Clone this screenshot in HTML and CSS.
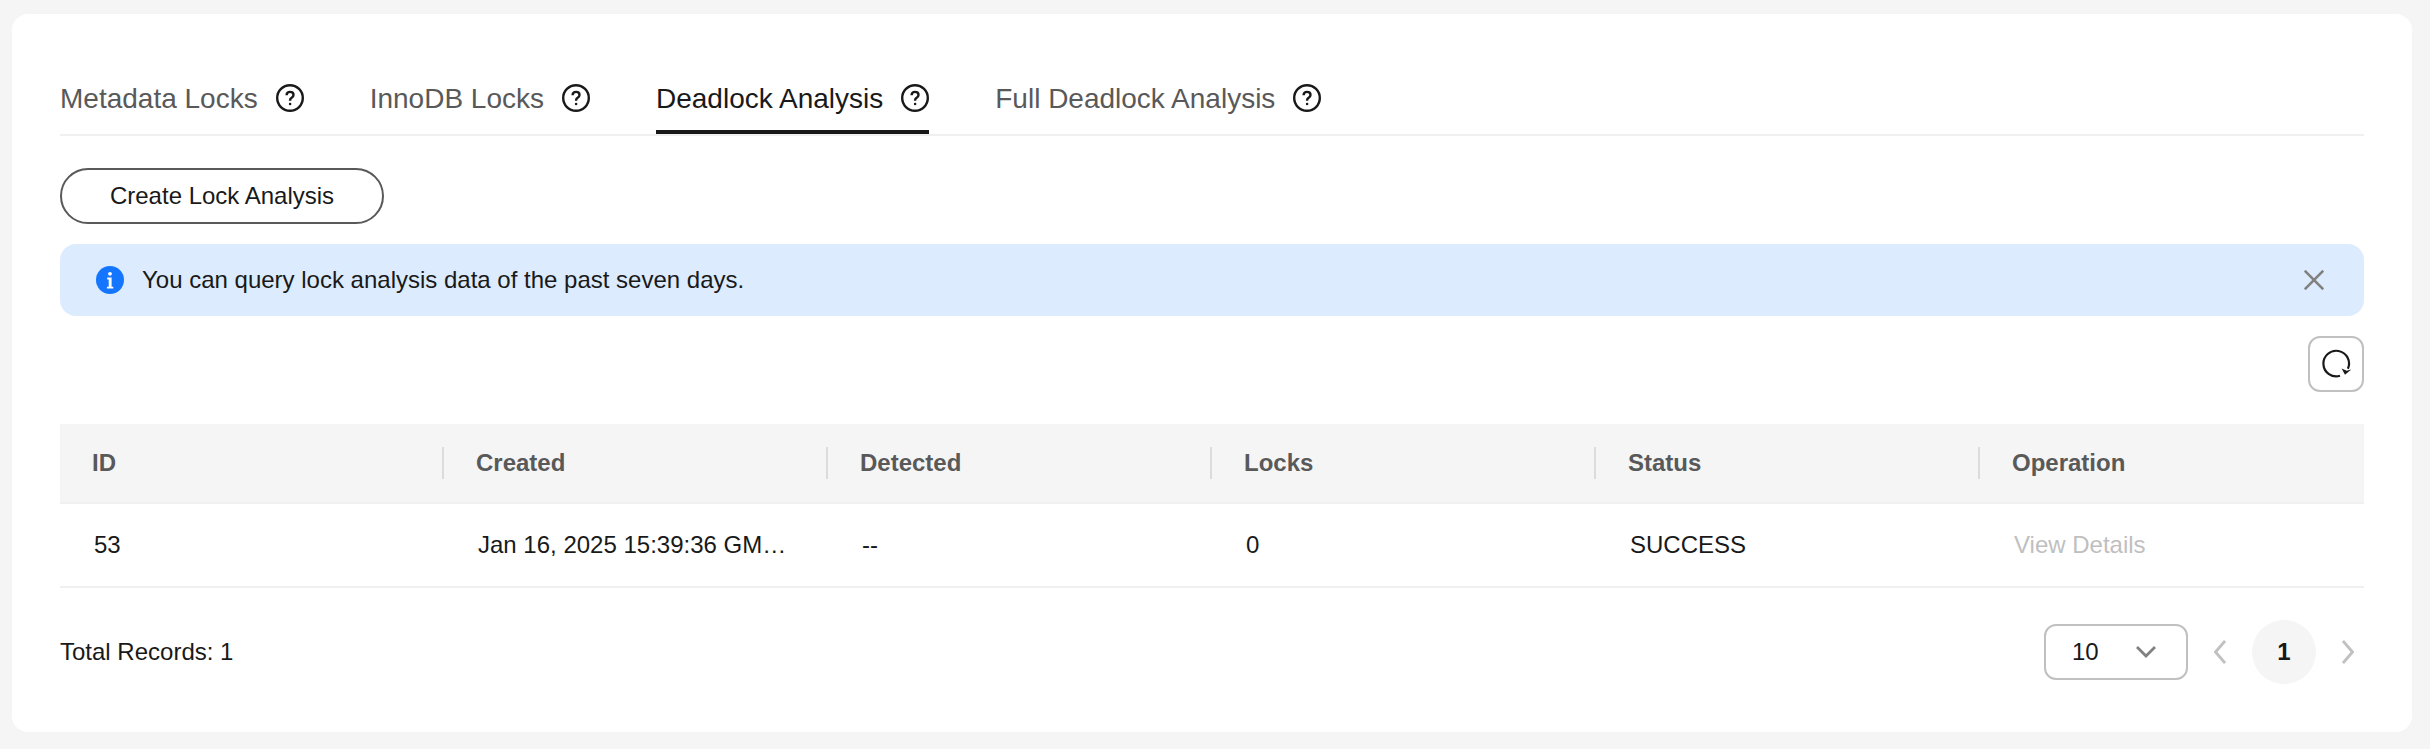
FILE: index.html
```html
<!DOCTYPE html>
<html lang="en">
<head>
<meta charset="utf-8">
<title>Deadlock Analysis</title>
<link rel="stylesheet" href="styles.css">
</head>
<body>
<main class="card">
  <nav class="tabs">
    <div class="tab"><span class="tab-label">Metadata Locks</span>
      <svg class="help" viewBox="0 0 28 28"><ellipse cx="14" cy="14" rx="12.8" ry="12.8"/><path d="M10.6 11.2c0-2 1.4-3.3 3.5-3.3s3.4 1.2 3.4 3c0 1.5-.9 2.2-1.9 2.9-.9.6-1.5 1.2-1.5 2.4v.6"/><circle class="dot" cx="14.1" cy="20" r="1.3"/></svg>
    </div>
    <div class="tab"><span class="tab-label">InnoDB Locks</span>
      <svg class="help" viewBox="0 0 28 28"><ellipse cx="14" cy="14" rx="12.8" ry="12.8"/><path d="M10.6 11.2c0-2 1.4-3.3 3.5-3.3s3.4 1.2 3.4 3c0 1.5-.9 2.2-1.9 2.9-.9.6-1.5 1.2-1.5 2.4v.6"/><circle class="dot" cx="14.1" cy="20" r="1.3"/></svg>
    </div>
    <div class="tab tab-active"><span class="tab-label">Deadlock Analysis</span>
      <svg class="help" viewBox="0 0 28 28"><ellipse cx="14" cy="14" rx="12.8" ry="12.8"/><path d="M10.6 11.2c0-2 1.4-3.3 3.5-3.3s3.4 1.2 3.4 3c0 1.5-.9 2.2-1.9 2.9-.9.6-1.5 1.2-1.5 2.4v.6"/><circle class="dot" cx="14.1" cy="20" r="1.3"/></svg>
    </div>
    <div class="tab"><span class="tab-label">Full Deadlock Analysis</span>
      <svg class="help" viewBox="0 0 28 28"><ellipse cx="14" cy="14" rx="12.8" ry="12.8"/><path d="M10.6 11.2c0-2 1.4-3.3 3.5-3.3s3.4 1.2 3.4 3c0 1.5-.9 2.2-1.9 2.9-.9.6-1.5 1.2-1.5 2.4v.6"/><circle class="dot" cx="14.1" cy="20" r="1.3"/></svg>
    </div>
  </nav>

  <button class="create-btn" type="button">Create Lock Analysis</button>

  <div class="notice">
    <svg class="notice-icon" viewBox="0 0 28 28"><circle class="info-bg" cx="14" cy="14" r="14"/><circle class="info-fg" cx="14" cy="7.8" r="1.9"/><path class="info-fg" d="M11.2 11.6h4.4v9.2h1.7v1.8h-6.4v-1.8h1.8v-7.4h-1.5z"/></svg>
    <span class="notice-text">You can query lock analysis data of the past seven days.</span>
    <svg class="notice-close" viewBox="0 0 20 20"><path d="M.7.7l18.6 18.6M19.3.7L.7 19.3"/></svg>
  </div>

  <div class="toolbar">
    <button class="refresh-btn" type="button" aria-label="Refresh">
      <svg viewBox="0 0 30 30"><path class="arc" d="M19 26.8a12.8 12.8 0 1 1 7.9-7"/><path class="arrow" d="M20.6 19.4l3.4 6.4 6.4-5.4-4.6 1.4z"/></svg>
    </button>
  </div>

  <table class="grid">
    <thead>
      <tr>
        <th><div class="th-inner">ID</div></th>
        <th><div class="th-inner">Created</div></th>
        <th><div class="th-inner">Detected</div></th>
        <th><div class="th-inner">Locks</div></th>
        <th><div class="th-inner">Status</div></th>
        <th><div class="th-inner">Operation</div></th>
      </tr>
    </thead>
    <tbody>
      <tr>
        <td>53</td>
        <td>Jan 16, 2025 15:39:36 GM…</td>
        <td>--</td>
        <td>0</td>
        <td>SUCCESS</td>
        <td class="muted">View Details</td>
      </tr>
    </tbody>
  </table>

  <footer class="footer">
    <span>Total Records: 1</span>
    <div class="pager">
      <div class="size-select"><span>10</span>
        <svg class="select-chevron" viewBox="0 0 20 12"><path d="M1 1l9 9 9-9"/></svg>
      </div>
      <svg class="page-arrow" viewBox="0 0 12 24"><path d="M11 1L1.5 12 11 23"/></svg>
      <div class="page-current">1</div>
      <svg class="page-arrow page-next" viewBox="0 0 12 24"><path d="M1 1l9.5 11L1 23"/></svg>
    </div>
  </footer>
</main>
</body>
</html>
```

FILE: styles.css
```css
* { box-sizing: border-box; }

html, body { height: 100%; }

body {
  margin: 0;
  padding: 14px 18px 17px 12px;
  background: #f5f5f5;
  color: #191919;
  font-family: "Liberation Sans", Arial, sans-serif;
  font-size: 24px;
  overflow: hidden;
}

.card {
  background: #fff;
  border-radius: 16px;
  padding: 70px 48px 48px;
}

.tabs {
  display: flex;
  gap: 66px;
  border-bottom: 2px solid #f0f0f0;
  height: 52px;
}

.tab {
  display: flex;
  align-items: flex-start;
  gap: 18px;
  height: 50px;
  border-bottom: 4px solid transparent;
  color: #595959;
  font-size: 28px;
}

.tab-label { line-height: 30px; }

.tab-active {
  color: #191919;
  border-bottom-color: #191919;
}

.help {
  flex: none;
  width: 28px;
  height: 28px;
  fill: none;
  stroke: #191919;
  stroke-width: 2.4;
}

.help .dot { fill: #191919; stroke: none; }

.create-btn {
  display: block;
  width: 324px;
  height: 56px;
  margin-top: 32px;
  background: #fff;
  border: 2px solid #595959;
  border-radius: 28px;
  color: #191919;
  font: inherit;
  padding: 0;
}

.notice {
  display: flex;
  align-items: center;
  height: 72px;
  margin-top: 20px;
  padding: 0 40px 0 36px;
  background: #dcebfe;
  border-radius: 16px;
}

.notice-icon { flex: none; width: 28px; height: 28px; margin-right: 18px; }
.info-bg { fill: #1476ff; }
.info-fg { fill: #fff; }

.notice-text { flex: 1; }

.notice-close {
  flex: none;
  width: 20px;
  height: 20px;
  fill: none;
  stroke: #808080;
  stroke-width: 2.6;
}

.toolbar {
  display: flex;
  justify-content: flex-end;
  margin-top: 20px;
}

.refresh-btn {
  display: flex;
  align-items: center;
  justify-content: center;
  width: 56px;
  height: 56px;
  padding: 0;
  background: #fff;
  border: 2px solid #c0c0c0;
  border-radius: 12px;
}

.refresh-btn svg { width: 30px; height: 30px; }
.refresh-btn .arc { fill: none; stroke: #191919; stroke-width: 2.2; }
.refresh-btn .arrow { fill: #191919; }

.grid {
  width: 100%;
  margin-top: 32px;
  border-collapse: separate;
  border-spacing: 0;
  table-layout: fixed;
}

.grid th {
  height: 80px;
  padding: 0;
  background: #f5f5f5;
  border-bottom: 2px solid #f0f0f0;
  color: #595959;
  font-weight: 700;
  text-align: left;
}

.th-inner {
  height: 32px;
  padding: 0 30px 0 32px;
  border-right: 2px solid #dcdcdc;
  line-height: 32px;
}

.grid th:last-child .th-inner { border-right: 0; }

.grid td {
  height: 84px;
  padding: 0 32px 0 34px;
  border-bottom: 2px solid #f0f0f0;
  white-space: nowrap;
}

.grid td.muted { color: #bfbfbf; }

.footer {
  display: flex;
  align-items: center;
  justify-content: space-between;
  height: 64px;
  margin-top: 32px;
}

.pager { display: flex; align-items: center; }

.size-select {
  display: flex;
  align-items: center;
  justify-content: space-between;
  width: 144px;
  height: 56px;
  padding: 0 30px 0 26px;
  border: 2px solid #c0c0c0;
  border-radius: 12px;
}

.select-chevron {
  width: 20px;
  height: 12px;
  fill: none;
  stroke: #808080;
  stroke-width: 2.8;
}

.page-arrow {
  flex: none;
  width: 12px;
  height: 24px;
  margin: 0 26px;
  fill: none;
  stroke: #c0c0c0;
  stroke-width: 2.8;
}

.page-next { margin-right: 10px; }

.page-current {
  width: 64px;
  height: 64px;
  border-radius: 50%;
  background: #f5f5f5;
  font-weight: 700;
  line-height: 64px;
  text-align: center;
}
```
